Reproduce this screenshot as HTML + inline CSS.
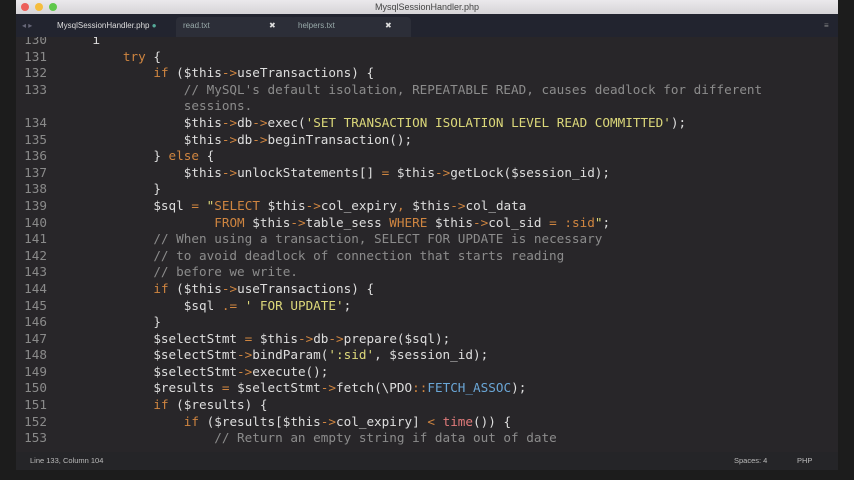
<!DOCTYPE html><html><head><style>
body{margin:0;width:854px;height:480px;background:#1c1c1c;overflow:hidden;position:relative;font-family:"Liberation Sans",sans-serif}
.win{position:absolute;left:16px;top:0;width:822px;height:470px;background:#282629;overflow:hidden}
.title{position:absolute;left:0;top:0;width:822px;height:14px;background:linear-gradient(#ebe9ec,#d6d4d7);font-size:9px;color:#444;text-align:center;line-height:14px}
.dot{position:absolute;top:3px;width:8px;height:8px;border-radius:50%}
.tabs{position:absolute;left:0;top:14px;width:822px;height:23px;background:#22242f}
.tab{position:absolute;top:5px;font-size:8px;color:#9aa;line-height:14px}
.code{position:absolute;left:0;top:37px;width:822px;height:415px;overflow:hidden}
.ln{position:absolute;left:0;width:31px;text-align:right;color:#8a8a8a}
pre{margin:0;position:absolute;top:-5px;left:0;font-family:"DejaVu Sans Mono",monospace;font-size:12.65px;line-height:16.6px;color:#dedede}
.t{position:absolute;left:46px}
.k{color:#cf8540}.o{color:#cf8540}.s{color:#dcd87a}.c{color:#8c8c8c}.b{color:#6aa6d6}.f{color:#e07a7a}
.status{position:absolute;left:0;top:452px;width:822px;height:18px;background:#252528;font-size:7.5px;color:#bbb;line-height:18px}
</style></head><body>
<div class="win">
<div class="title">MysqlSessionHandler.php
<div class="dot" style="left:5px;background:#ec5f5a"></div><div class="dot" style="left:19px;background:#f5bd3e"></div><div class="dot" style="left:33px;background:#5fc84a"></div></div>
<div class="tabs">
<div class="tab" style="left:6px;color:#667">◂ ▸</div>
<div class="tab" style="left:41px;color:#ddd">MysqlSessionHandler.php <span style="color:#5a9">●</span></div>
<div style="position:absolute;left:160px;top:3px;width:120px;height:20px;background:#2c2e38;border-radius:4px 4px 0 0"></div>
<div class="tab" style="left:167px">read.txt</div><div class="tab" style="left:253px;color:#ddd">✖</div>
<div style="position:absolute;left:275px;top:3px;width:120px;height:20px;background:#2c2e38;border-radius:4px 4px 0 0"></div>
<div class="tab" style="left:282px">helpers.txt</div><div class="tab" style="left:369px;color:#ddd">✖</div>
<div class="tab" style="left:808px;color:#888">≡</div>
</div>
<div class="code"><pre><span class="ln">130
131
132
133

134
135
136
137
138
139
140
141
142
143
144
145
146
147
148
149
150
151
152
153</span><span class="t">    i
        <span class="k">try</span> {
            <span class="k">if</span> ($this<span class="o">-&gt;</span>useTransactions) {
                <span class="c">// MySQL's default isolation, REPEATABLE READ, causes deadlock for different
                sessions.</span>
                $this<span class="o">-&gt;</span>db<span class="o">-&gt;</span>exec(<span class="s">'SET TRANSACTION ISOLATION LEVEL READ COMMITTED'</span>);
                $this<span class="o">-&gt;</span>db<span class="o">-&gt;</span>beginTransaction();
            } <span class="k">else</span> {
                $this<span class="o">-&gt;</span>unlockStatements[] <span class="o">=</span> $this<span class="o">-&gt;</span>getLock($session_id);
            }
            $sql <span class="o">=</span> <span class="s">"<span class="k">SELECT</span> </span>$this<span class="o">-&gt;</span>col_expiry<span class="o">,</span> $this<span class="o">-&gt;</span>col_data
                    <span class="k">FROM</span> $this<span class="o">-&gt;</span>table_sess <span class="k">WHERE</span> $this<span class="o">-&gt;</span>col_sid <span class="o">=</span> <span class="k">:sid</span><span class="s">"</span>;
            <span class="c">// When using a transaction, SELECT FOR UPDATE is necessary
            // to avoid deadlock of connection that starts reading
            // before we write.</span>
            <span class="k">if</span> ($this<span class="o">-&gt;</span>useTransactions) {
                $sql <span class="o">.=</span> <span class="s">' FOR UPDATE'</span>;
            }
            $selectStmt <span class="o">=</span> $this<span class="o">-&gt;</span>db<span class="o">-&gt;</span>prepare($sql);
            $selectStmt<span class="o">-&gt;</span>bindParam(<span class="s">':sid'</span>, $session_id);
            $selectStmt<span class="o">-&gt;</span>execute();
            $results <span class="o">=</span> $selectStmt<span class="o">-&gt;</span>fetch(\PDO<span class="o">::</span><span class="b">FETCH_ASSOC</span>);
            <span class="k">if</span> ($results) {
                <span class="k">if</span> ($results[$this<span class="o">-&gt;</span>col_expiry] <span class="o">&lt;</span> <span class="f">time</span>()) {
                    <span class="c">// Return an empty string if data out of date</span></span></pre></div>
<div class="status"><span style="position:absolute;left:14px">Line 133, Column 104</span><span style="position:absolute;left:718px">Spaces: 4</span><span style="position:absolute;left:781px">PHP</span></div>
</div>
</body></html>
